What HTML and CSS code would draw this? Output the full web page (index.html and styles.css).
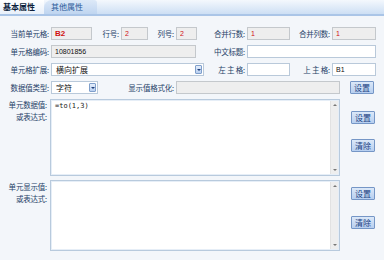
FILE: index.html
```html
<!DOCTYPE html>
<html>

<head>
    <meta charset="UTF-8">
    <meta name="viewport" content="width=device-width, initial-scale=1.0">
    <title>单元格属性</title>
    <link rel="stylesheet" href="styles.css">
</head>

<body>
    <div class="tabs">
        <div class="tab active">基本属性</div>
        <div class="tab other">其他属性</div>
        <div class="tab-rest"></div>
    </div>

    <div class="form">
        <!-- row 1 -->
        <div class="row">
            <span class="lbl w47">当前单元格:</span>
            <input class="box ro red w41" value="B2" readonly>
            <span class="lbl w29">行号:</span>
            <input class="box ro red-n w27" value="2" readonly>
            <span class="lbl w28">列号:</span>
            <input class="box ro red-n w21" value="2" readonly>
            <span class="lbl w50">合并行数:</span>
            <input class="box ro red-n w43" value="1" readonly>
            <span class="lbl w42">合并列数:</span>
            <input class="box ro red-n w44" value="1" readonly>
        </div>

        <!-- row 2 -->
        <div class="row">
            <span class="lbl w47">单元格编码:</span>
            <input class="box ro w145" value="10801856" readonly>
            <span class="lbl w51">中文标题:</span>
            <input class="box w129" value="">
        </div>

        <!-- row 3 -->
        <div class="row">
            <span class="lbl w47">单元格扩展:</span>
            <div class="select w153">
                <span class="sel-text">横向扩展</span>
                <span class="sel-arrow"></span>
            </div>
            <span class="lbl w43">左 主 格:</span>
            <input class="box w43" value="">
            <span class="lbl w42">上 主 格:</span>
            <input class="box w44" value="B1">
        </div>

        <!-- row 4 -->
        <div class="row">
            <span class="lbl w47">数据值类型:</span>
            <div class="select w47">
                <span class="sel-text">字符</span>
                <span class="sel-arrow"></span>
            </div>
            <span class="lbl w78">显示值格式化:</span>
            <input class="box ro w164" value="" readonly>
            <button class="btn btn-row">设置</button>
        </div>

        <!-- data value -->
        <div class="area-row area1">
            <div class="area-lbl">单元数据值:<br>或表达式:</div>
            <div class="area">
                <textarea>=to(1,3)</textarea>
                <div class="scroll">
                    <span class="up"></span>
                    <span class="down"></span>
                </div>
            </div>
            <div class="btns">
                <button class="btn">设置</button>
                <button class="btn">清除</button>
            </div>
        </div>

        <!-- display value -->
        <div class="area-row area2">
            <div class="area-lbl">单元显示值:<br>或表达式:</div>
            <div class="area">
                <textarea></textarea>
                <div class="scroll">
                    <span class="up"></span>
                    <span class="down"></span>
                </div>
            </div>
            <div class="btns">
                <button class="btn">设置</button>
                <button class="btn">清除</button>
            </div>
        </div>
    </div>
</body>

</html>
```

FILE: styles.css
```css
body {
    margin: 0px;
    padding: 0px;
    width: 384px;
    height: 260px;
    overflow: hidden;
    background-color: #f3f6fa;
    font-family: "Noto Sans CJK SC", "Liberation Sans", sans-serif;
    font-size: 7.5px;
    color: #263f68;
}

/* tab bar */
.tabs {
    display: flex;
    height: 14px;
    background: linear-gradient(#f4f8fd, #cddff4);
    border-bottom: 2px solid #aac5e7;
}

.tab {
    line-height: 14px;
    font-size: 8px;
    white-space: nowrap;
}

.tab.active {
    padding: 0px 9px 0px 3px;
    font-weight: bold;
    color: #0d1f3c;
    background: linear-gradient(#ffffff, #e8f0fa);
}

.tab.other {
    padding: 0px 14px 0px 7px;
    color: #2b5a9a;
    background: linear-gradient(#dde9f8, #bfd5f0);
    border-top-left-radius: 8px;
    border-top-right-radius: 3px;
}

.tab-rest {
    flex: 1;
}

.form {
    padding: 11px 0px 0px 4px;
}

.row {
    display: flex;
    align-items: center;
    height: 13px;
    margin-bottom: 5px;
}

.lbl {
    flex: none;
    text-align: right;
    padding-right: 2px;
    box-sizing: border-box;
    white-space: nowrap;
    line-height: 13px;
    letter-spacing: -0.2px;
}

.box {
    flex: none;
    box-sizing: border-box;
    height: 13px;
    margin: 0px;
    padding: 0px 3px;
    border: 1px solid #b9c9da;
    background-color: #ffffff;
    font-family: "Liberation Sans", sans-serif;
    font-size: 7px;
    color: #111111;
    outline: none;
}

.box.ro {
    background-color: #eeeeee;
    border-color: #c4c8cc;
}

.box.red {
    color: #d01010;
    font-weight: bold;
    font-size: 8px;
}

.box.red-n {
    color: #d01010;
}

.select {
    flex: none;
    box-sizing: border-box;
    display: flex;
    align-items: center;
    height: 13px;
    border: 1px solid #b9c9da;
    background-color: #ffffff;
    color: #111111;
}

.sel-text {
    flex: 1;
    padding-left: 4px;
    font-size: 8px;
}

.sel-arrow {
    width: 7px;
    height: 9px;
    margin-right: 1px;
    box-sizing: border-box;
    border: 1px solid #7f9fcb;
    border-radius: 1px;
    background: linear-gradient(#e4eefb, #b9cff0);
    display: flex;
    align-items: center;
    justify-content: center;
}

.sel-arrow::after {
    content: "";
    border-left: 2px solid transparent;
    border-right: 2px solid transparent;
    border-top: 2px solid #1f3f7a;
}

.w21 { width: 21px; }
.w27 { width: 27px; }
.w28 { width: 28px; }
.w29 { width: 29px; }
.w41 { width: 41px; }
.w42 { width: 42px; }
.w43 { width: 43px; }
.w44 { width: 44px; }
.w47 { width: 47px; }
.w50 { width: 50px; }
.w51 { width: 51px; }
.w78 { width: 78px; }
.w129 { width: 129px; }
.w145 { width: 145px; }
.w153 { width: 153px; }
.w164 { width: 164px; }

.btn {
    box-sizing: border-box;
    width: 24px;
    height: 13px;
    padding: 0px;
    margin: 0px;
    border: 1px solid #7596c6;
    border-radius: 1px;
    background: linear-gradient(#dbe8f8, #b7cff0);
    color: #1b3f82;
    font-family: "Noto Sans CJK SC", sans-serif;
    font-size: 8px;
    line-height: 11px;
}

.btn-row {
    margin-left: 10px;
}

/* textarea blocks */
.area-row {
    display: flex;
}

.area1 {
    height: 77px;
    margin-bottom: 4px;
}

.area2 {
    height: 71px;
}

.area-lbl {
    width: 46px;
    box-sizing: border-box;
    padding-right: 3px;
    text-align: right;
    line-height: 12px;
    white-space: nowrap;
    letter-spacing: -0.2px;
}

.area1 .area-lbl {
    padding-top: 0px;
}

.area2 .area-lbl {
    padding-top: 1px;
}

.area {
    display: flex;
    width: 290px;
    box-sizing: border-box;
    border: 1px solid #b8cadd;
    box-shadow: inset 0px 0px 0px 1px #e6eef7;
    background-color: #ffffff;
    padding: 1px;
}

.area textarea {
    flex: 1;
    margin: 0px;
    padding: 1px 3px;
    border: none;
    resize: none;
    outline: none;
    overflow: hidden;
    font-family: "DejaVu Sans Mono", monospace;
    font-size: 7px;
    color: #222222;
    background: transparent;
}

.scroll {
    width: 8px;
    display: flex;
    flex-direction: column;
    justify-content: space-between;
    align-items: center;
    background-color: #eeeeee;
    border-left: 1px solid #e2e2e2;
    padding: 3px 0px;
    box-sizing: border-box;
}

.scroll .up {
    border-left: 2px solid transparent;
    border-right: 2px solid transparent;
    border-bottom: 2px solid #777777;
}

.scroll .down {
    border-left: 2px solid transparent;
    border-right: 2px solid transparent;
    border-top: 2px solid #777777;
}

.btns {
    display: flex;
    flex-direction: column;
    margin-left: 11px;
}

.area1 .btns {
    padding-top: 12px;
    gap: 15px;
}

.area2 .btns {
    padding-top: 7px;
    gap: 16px;
}
```
